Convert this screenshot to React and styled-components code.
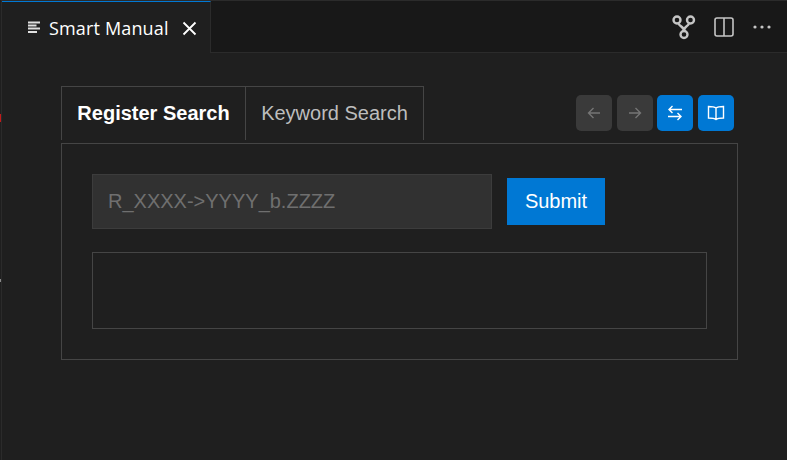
import React from "react";
import styled, { createGlobalStyle } from "styled-components";

const Global = createGlobalStyle`
  html, body { margin: 0; padding: 0; background: #1f1f1f; }
  body { font-family: "Liberation Sans", Arial, sans-serif; }
`;

const Window = styled.div`
  display: flex;
  width: 787px;
  height: 460px;
  overflow: hidden;
  background: #1f1f1f;
`;
const Rail = styled.div`
  position: relative;
  flex: none;
  width: 2px;
  box-sizing: border-box;
  border-right: 1px solid #2b2b2b;
`;
const Mark = styled.div`
  position: absolute;
  left: 0;
  top: ${(p) => p.top}px;
  width: 1px;
  height: ${(p) => p.h}px;
  background: ${(p) => p.color};
`;
const Main = styled.div`
  flex: 1;
  min-width: 0;
`;
const TabBar = styled.div`
  display: flex;
  justify-content: space-between;
  height: 53px;
  box-sizing: border-box;
  background: #181818;
  border-top: 1px solid #2b2b2b;
  border-bottom: 1px solid #2b2b2b;
`;
const EditorTab = styled.div`
  display: flex;
  align-items: center;
  width: 209px;
  height: 52px;
  box-sizing: border-box;
  padding: 1px 0 0 25px;
  background: #1f1f1f;
  border-top: 1px solid #0078d4;
  border-right: 1px solid #2b2b2b;
  color: #fff;
  font: 18px "Open Sans", sans-serif;
`;
const TabTitle = styled.span`
  margin-left: 8px;
  letter-spacing: 0.15px;
`;
const Close = styled.svg`
  margin-left: 13px;
`;
const Actions = styled.div`
  display: flex;
  align-items: center;
  padding-right: 15px;
  gap: 18px;
  color: #c5c5c5;
`;
const Content = styled.div`
  padding: 33px 0 0 59px;
  width: 677px;
`;
const TopRow = styled.div`
  display: flex;
  justify-content: space-between;
`;
const Tabs = styled.div`
  display: flex;
  height: 54px;
`;
const Tab = styled.div`
  display: flex;
  align-items: center;
  justify-content: center;
  box-sizing: border-box;
  width: ${(p) => p.w}px;
  height: 54px;
  border: 1px solid #454545;
  border-bottom: none;
  border-left-width: ${(p) => (p.second ? 0 : 1)}px;
  font-size: 20px;
  font-weight: ${(p) => (p.active ? 700 : 400)};
  color: ${(p) => (p.active ? "#fff" : "#bdbdbd")};
`;
const Tools = styled.div`
  display: flex;
  gap: 5px;
  padding: 9px 4px 0 0;
`;
const ToolBtn = styled.div`
  display: flex;
  align-items: center;
  justify-content: center;
  width: 36px;
  height: 36px;
  margin-left: ${(p) => p.ml || 0}px;
  border-radius: 5px;
  background: ${(p) => (p.on ? "#0078d4" : "#3a3a3a")};
  color: ${(p) => (p.on ? "#fff" : "#757575")};
`;
const Panel = styled.div`
  box-sizing: border-box;
  height: 217px;
  margin-top: 3px;
  padding: 30px;
  border: 1px solid #454545;
`;
const Form = styled.div`
  display: flex;
  align-items: center;
  gap: 15px;
`;
const Input = styled.input`
  box-sizing: border-box;
  width: 400px;
  height: 55px;
  padding: 0 15px;
  background: #313131;
  border: 1px solid #3c3c3c;
  outline: none;
  color: #ccc;
  font: 20px "Liberation Sans", Arial, sans-serif;
  &::placeholder { color: #6f6f6f; opacity: 1; }
`;
const Submit = styled.button`
  width: 98px;
  height: 47px;
  padding: 0;
  border: none;
  background: #0078d4;
  color: #fff;
  font: 20px "Liberation Sans", Arial, sans-serif;
`;
const Output = styled.div`
  box-sizing: border-box;
  width: 615px;
  height: 77px;
  margin-top: 23px;
  border: 1px solid #454545;
`;

const ArrowLeft = () => (
  <svg width="16" height="16" viewBox="0 0 16 16" fill="none" stroke="currentColor" strokeWidth="1.4">
    <path d="M14 8H2.500M7.500 3 2.500 8l5 5" />
  </svg>
);
const ArrowRight = () => (
  <svg width="16" height="16" viewBox="0 0 16 16" fill="none" stroke="currentColor" strokeWidth="1.4">
    <path d="M2 8h11.500M8.500 3l5 5-5 5" />
  </svg>
);

export default function App() {
  return (
    <>
      <Global />
      <Window>
        <Rail>
          <Mark top={114} h={8} color="#c21a1a" />
          <Mark top={279} h={3} color="#8a8a8a" />
        </Rail>
        <Main>
          <TabBar>
            <EditorTab>
              <svg width="14" height="14" viewBox="0 0 14 14" stroke="#e0e0e0" strokeWidth="1.800">
                <path d="M1 1.500h12M1 4.500h8.500M1 7.500h12M1 11h9" />
              </svg>
              <TabTitle>Smart Manual</TabTitle>
              <Close width="15" height="15" viewBox="0 0 15 15" stroke="#fff" strokeWidth="1.800">
                <path d="M1.500 1.500l12 12M13.500 1.500l-12 12" />
              </Close>
            </EditorTab>
            <Actions>
              <svg width="24" height="26" viewBox="0 0 24 26" fill="none" stroke="currentColor" strokeWidth="2.400">
                <circle cx="5" cy="6" r="3.500" />
                <circle cx="18.500" cy="6" r="3.500" />
                <circle cx="12" cy="20.500" r="3.500" />
                <path d="M6.500 9.500c1 3.500 5.500 2.500 5.500 7.500M17 9.500c-1 3.500-5 2.500-5 7.500" />
              </svg>
              <svg width="20" height="20" viewBox="0 0 20 20" fill="none" stroke="currentColor" strokeWidth="1.600">
                <rect x="1" y="1" width="18" height="18" rx="2" />
                <path d="M10 1v18" />
              </svg>
              <svg width="20" height="20" viewBox="0 0 20 20" fill="currentColor">
                <circle cx="3" cy="10" r="1.600" />
                <circle cx="10" cy="10" r="1.600" />
                <circle cx="17" cy="10" r="1.600" />
              </svg>
            </Actions>
          </TabBar>
          <Content>
            <TopRow>
              <Tabs>
                <Tab active w={185}>Register Search</Tab>
                <Tab second w={178}>Keyword Search</Tab>
              </Tabs>
              <Tools>
                <ToolBtn><ArrowLeft /></ToolBtn>
                <ToolBtn><ArrowRight /></ToolBtn>
                <ToolBtn on ml={-1}>
                  <svg width="18" height="18" viewBox="0 0 18 18" fill="none" stroke="currentColor" strokeWidth="1.400">
                    <path d="M16 5.500H3M6.500 2 3 5.500 6.500 9M2 12.500h13M11.500 9l3.500 3.500-3.500 3.500" />
                  </svg>
                </ToolBtn>
                <ToolBtn on>
                  <svg width="18" height="18" viewBox="0 0 18 18" fill="none" stroke="currentColor" strokeWidth="1.400">
                    <path d="M9 4C7.500 2.800 5 2.500 1.500 2.500v11.500c3.500 0 6 .2 7.500 1.500 1.500-1.300 4-1.500 7.500-1.500V2.500C13 2.500 10.500 2.800 9 4zM9 4v12" />
                  </svg>
                </ToolBtn>
              </Tools>
            </TopRow>
            <Panel>
              <Form>
                <Input placeholder="R_XXXX->YYYY_b.ZZZZ" />
                <Submit>Submit</Submit>
              </Form>
              <Output />
            </Panel>
          </Content>
        </Main>
      </Window>
    </>
  );
}
